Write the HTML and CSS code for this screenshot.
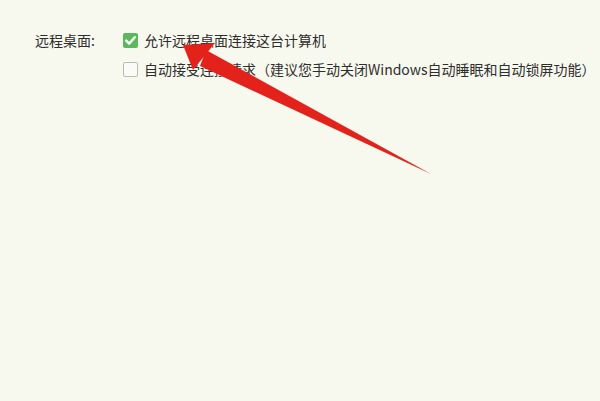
FILE: index.html
```html
<!DOCTYPE html>
<html lang="zh-CN">
<head>
<meta charset="utf-8">
<title>远程桌面</title>
<link rel="stylesheet" href="styles.css">
</head>
<body>
<div class="page">
  <div class="settings">
    <div class="label">远程桌面:</div>
    <div class="options">
      <div class="option">
        <span class="box checked">
          <svg viewBox="0 0 15 15" width="15" height="15"><path d="M3.2 7.6 L6.2 10.6 L11.8 4.2" fill="none" stroke="#fff" stroke-width="2.4" stroke-linecap="round" stroke-linejoin="round"/></svg>
        </span>
        <span class="text">允许远程桌面连接这台计算机</span>
      </div>
      <div class="option">
        <span class="box"></span>
        <span class="text">自动接受连接请求（建议您手动关闭Windows自动睡眠和自动锁屏功能）</span>
      </div>
    </div>
  </div>
  <svg class="arrow" viewBox="0 0 600 401" width="600" height="401">
    <polygon points="183,45 215,43 193,70" fill="#e4221c"/>
    <polygon points="206,50 431,174 200,66" fill="#e4221c"/>
  </svg>
</div>
</body>
</html>
```
FILE: styles.css
```css
html, body {
  margin: 0;
  padding: 0;
  background: #f8f9ee;
}
.page {
  position: relative;
  width: 600px;
  height: 401px;
  overflow: hidden;
  font-family: "Noto Sans CJK SC", "Noto Sans", sans-serif;
  font-size: 14px;
  color: #2e2e2e;
}
.settings {
  display: flex;
  padding: 30px 0 0 35px;
}
.label {
  width: 88px;
  line-height: 20px;
}
.options {
  display: flex;
  flex-direction: column;
  gap: 9px;
}
.option {
  display: flex;
  align-items: center;
  gap: 6px;
  line-height: 20px;
  white-space: nowrap;
}
.box {
  width: 13px;
  height: 13px;
  border: 1px solid #bcbcb6;
  border-radius: 2px;
  background: #fbfbf6;
  display: flex;
  align-items: center;
  justify-content: center;
}
.box.checked {
  width: 15px;
  height: 15px;
  border: none;
  background: #5cb85c;
}
.box svg {
  display: block;
}
.arrow {
  position: absolute;
  left: 0;
  top: 0;
  pointer-events: none;
}
```
